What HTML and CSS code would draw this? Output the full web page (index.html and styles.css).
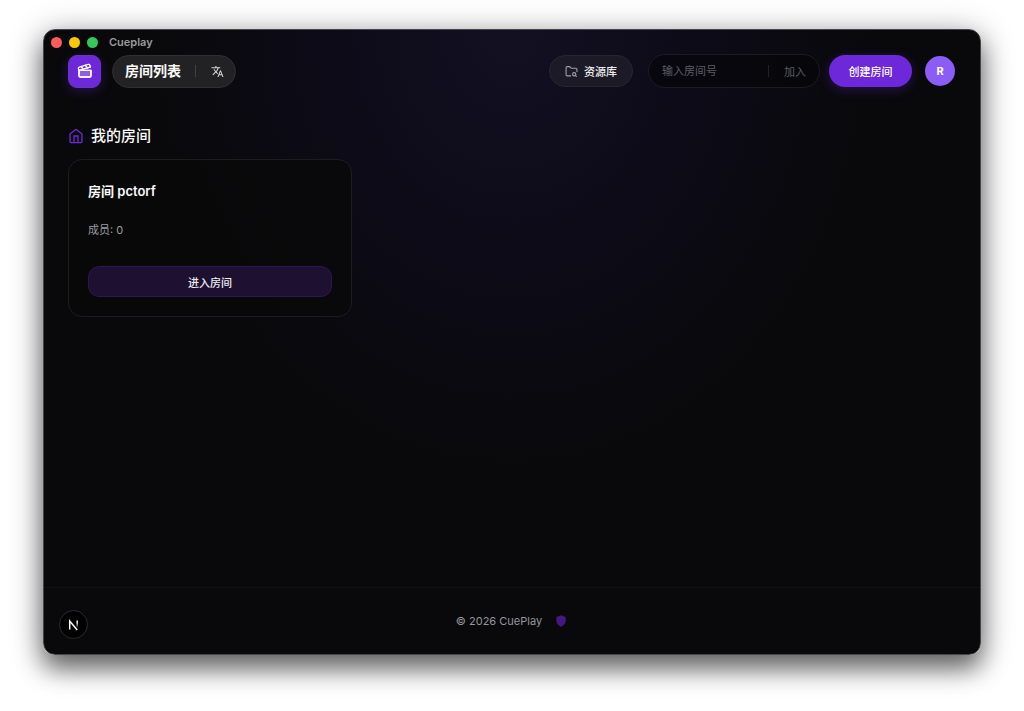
FILE: index.html
```html
<!DOCTYPE html>
<html lang="zh-CN">
<head>
    <meta charset="UTF-8">
    <meta name="viewport" content="width=device-width, initial-scale=1.0">
    <title>Cueplay</title>
    <link rel="stylesheet" href="styles.css">
</head>
<body>

<div class="window">
    <div class="titlebar">
        <span class="dot dot-close"></span>
        <span class="dot dot-min"></span>
        <span class="dot dot-max"></span>
        <span class="titlebar-name">Cueplay</span>
    </div>

    <header class="header">
        <a class="logo" href="#" aria-label="CuePlay">
            <svg width="16" height="16" viewBox="0 0 24 24">
                <path d="M3 11h18v8a2 2 0 0 1-2 2H5a2 2 0 0 1-2-2z" fill="#fff" fill-opacity="0.25"/>
                <path d="M20.2 6 3 11l-.9-2.4c-.3-1.1.3-2.2 1.3-2.5l13.5-4c1.1-.3 2.2.3 2.5 1.3Z"/>
                <path d="m6.2 5.3 3.1 3.9"/>
                <path d="m12.4 3.4 3.1 4"/>
                <path d="M3 11h18v8a2 2 0 0 1-2 2H5a2 2 0 0 1-2-2Z"/>
            </svg>
        </a>
        <div class="title-pill">
            <h1>房间列表</h1>
            <span class="divider"></span>
            <button class="lang" type="button" aria-label="切换语言">
                <svg width="13" height="13" viewBox="0 0 24 24">
                    <path d="M12.87 15.07l-2.54-2.51.03-.03A17.52 17.52 0 0 0 14.07 6H17V4h-7V2H8v2H1v2h11.17C11.5 7.92 10.44 9.75 9 11.35 8.07 10.32 7.3 9.19 6.69 8h-2c.73 1.63 1.73 3.17 2.98 4.56l-5.09 5.02L4 19l5-5 3.11 3.11.76-2.04zM18.5 10h-2L12 22h2l1.12-3h4.75L21 22h2l-4.5-12zm-2.62 7l1.62-4.33L19.12 17h-3.24z"/>
                </svg>
            </button>
        </div>

        <div class="actions">
            <button class="library" type="button">
                <svg width="13" height="13" viewBox="0 0 24 24">
                    <path d="M10.7 20H4a2 2 0 0 1-2-2V5a2 2 0 0 1 2-2h3.9a2 2 0 0 1 1.7.9l.8 1.2a2 2 0 0 0 1.7.9H20a2 2 0 0 1 2 2v4.1"/>
                    <circle cx="17" cy="17" r="3"/>
                    <path d="m21 21-1.9-1.9"/>
                </svg>
                资源库
            </button>
            <form class="join">
                <input type="text" placeholder="输入房间号" aria-label="输入房间号">
                <span class="divider"></span>
                <button type="button">加入</button>
            </form>
            <button class="create" type="button">创建房间</button>
            <button class="avatar" type="button">R</button>
        </div>
    </header>

    <main class="main">
        <h2 class="section-title">
            <svg width="16" height="16" viewBox="0 0 24 24">
                <path d="M3 9l9-7 9 7v11a2 2 0 0 1-2 2H5a2 2 0 0 1-2-2z"/>
                <path d="M9 22V12h6v10"/>
            </svg>
            我的房间
        </h2>
        <div class="rooms">
            <div class="card">
                <h3>房间 pctorf</h3>
                <p>成员: 0</p>
                <button class="enter" type="button">进入房间</button>
            </div>
        </div>
    </main>

    <footer class="footer">
        <span>© 2026 CuePlay</span>
        <svg width="14" height="14" viewBox="0 0 24 24">
            <path d="M12 22s8-4 8-10V5l-8-3-8 3v7c0 6 8 10 8 10z"/>
        </svg>
    </footer>

    <!-- dev tools badge, floats over the page -->
    <button class="dev-badge" type="button" aria-label="Next.js">
        <svg width="14" height="14" viewBox="0 0 14 14">
            <defs>
                <linearGradient id="fade" x1="0" y1="0" x2="0" y2="1">
                    <stop offset="0.3" stop-color="#fff"/>
                    <stop offset="1" stop-color="#fff" stop-opacity="0"/>
                </linearGradient>
            </defs>
            <path d="M2.7 11.5V3l7.5 9" fill="none" stroke="#fff" stroke-width="1.5"/>
            <rect x="9.5" y="2.5" width="1.4" height="7.5" fill="url(#fade)"/>
        </svg>
    </button>
</div>

</body>
</html>
```
FILE: styles.css
```css
* {
    box-sizing: border-box;
}
body {
    margin: 0;
    padding: 29px 43px 56px 43px;
    min-height: 100vh;
    display: flex;
    background: #fff;
    font-family: Inter, "Noto Sans CJK SC", sans-serif;
    font-size: 11px;
    color: #fafafa;
}
h1, h2, h3, p {
    margin: 0;
}
button, input {
    font: inherit;
    color: inherit;
    border: none;
    background: none;
    padding: 0;
}
button {
    cursor: pointer;
}
svg {
    display: block;
    flex: none;
}

.window {
    position: relative;
    flex: 1;
    min-width: 0;
    display: flex;
    flex-direction: column;
    border: 1px solid #46464a;
    border-radius: 12px;
    background: radial-gradient(ellipse 360px 440px at 50% 0, #131022 0%, #0d0b18 50%, #09090b 100%);
    box-shadow: 0 14px 24px rgba(0, 0, 0, 0.5), 0 4px 34px rgba(0, 0, 0, 0.3);
}

.titlebar {
    display: flex;
    align-items: center;
    gap: 7px;
    height: 24px;
    padding-left: 7px;
}
.dot {
    width: 11px;
    height: 11px;
    border-radius: 50%;
}
.dot-close {
    background: #ff5a5f;
}
.dot-min {
    background: #fdc800;
}
.dot-max {
    background: #34c759;
}
.titlebar-name {
    margin-left: 4px;
    font-size: 11px;
    font-weight: 600;
    color: #9a9a9c;
}

.header {
    display: flex;
    align-items: center;
    padding: 0 25px 0 24px;
    height: 34px;
}
.logo {
    display: flex;
    align-items: center;
    justify-content: center;
    width: 33px;
    height: 33px;
    border: 1px solid #6a35c0;
    border-radius: 9px;
    background: #6d28d9;
    box-shadow: 0 3px 12px rgba(109, 40, 217, 0.3);
}
.logo svg, .library svg, .section-title svg {
    fill: none;
    stroke: currentColor;
    stroke-width: 2;
    stroke-linecap: round;
    stroke-linejoin: round;
}
.logo svg {
    color: #fff;
}
.title-pill {
    display: flex;
    align-items: center;
    height: 33px;
    margin-left: 11px;
    padding: 0 11px 0 12px;
    border: 1px solid #303033;
    border-radius: 17px;
    background: #222224;
}
.title-pill h1 {
    font-size: 14px;
    font-weight: 700;
    line-height: 20px;
}
.divider {
    width: 1px;
    height: 12px;
    background: #414145;
}
.title-pill .divider {
    margin: 0 15px 0 14px;
}
.lang {
    display: flex;
    color: #d8d8dc;
}
.lang svg {
    fill: currentColor;
}

.actions {
    display: flex;
    align-items: center;
    margin-left: auto;
}
.library {
    display: flex;
    align-items: center;
    gap: 6px;
    height: 32px;
    padding: 0 15px;
    border: 1px solid #272531;
    border-radius: 16px;
    background: #1c1a26;
    font-weight: 500;
    color: #ededf0;
}
.library svg {
    color: #a0a0aa;
}
.join {
    display: flex;
    align-items: center;
    width: 172px;
    height: 34px;
    margin: 0 9px 0 15px;
    padding: 0 13px;
    border: 1px solid #1c1b20;
    border-radius: 17px;
    background: rgba(5, 5, 8, 0.6);
}
.join input {
    flex: 1;
    min-width: 0;
    outline: none;
}
.join input::placeholder {
    color: #5d5d64;
}
.join .divider {
    margin-right: 15px;
    background: #222226;
}
.join button {
    color: #5c5c61;
}
.create {
    width: 83px;
    height: 32px;
    border-radius: 16px;
    background: #6d28d9;
    box-shadow: 0 3px 12px rgba(109, 40, 217, 0.3);
    font-weight: 500;
    color: #fff;
}
.avatar {
    width: 30px;
    height: 30px;
    margin-left: 13px;
    border-radius: 50%;
    background: #8b5cf6;
    font-weight: 700;
    color: #fff;
}

.main {
    flex: 1;
    padding: 37px 24px 24px;
}
.section-title {
    display: flex;
    align-items: center;
    gap: 7px;
    font-size: 15px;
    font-weight: 500;
    line-height: 22px;
}
.section-title svg {
    color: #6d28d9;
}
.rooms {
    display: grid;
    grid-template-columns: repeat(3, 1fr);
    gap: 18px;
    margin-top: 12px;
}
.card {
    padding: 20px 19px 19px;
    border: 1px solid #1d1d1f;
    border-radius: 14px;
    background: rgba(9, 9, 9, 0.7);
}
.card h3 {
    font-size: 13px;
    font-weight: 600;
    line-height: 22px;
}
.card p {
    margin-top: 20px;
    line-height: 16px;
    color: #9b9ba3;
}
.enter {
    width: 100%;
    height: 31px;
    margin-top: 28px;
    border: 1px solid #2e1558;
    border-radius: 11px;
    background: #1d1030;
    font-weight: 500;
    color: #ededf0;
}

.footer {
    display: flex;
    align-items: center;
    justify-content: center;
    gap: 12px;
    height: 67px;
    border-top: 1px solid #111113;
    color: #96969e;
}
.footer svg {
    fill: #43187f;
}

.dev-badge {
    position: absolute;
    left: 15px;
    bottom: 15px;
    display: flex;
    align-items: center;
    justify-content: center;
    width: 29px;
    height: 29px;
    border: 1px solid #2c2c2e;
    border-radius: 50%;
    background: #000;
}
```
